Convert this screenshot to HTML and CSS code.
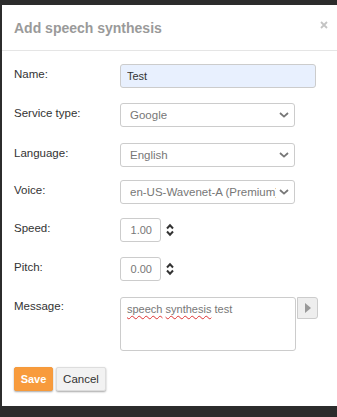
FILE: index.html
```html
<!DOCTYPE html>
<html>
<head>
<meta charset="utf-8">
<link rel="stylesheet" href="styles.css">
</head>
<body>
<div class="overlay">
  <div class="dialog">
    <div class="dialog-header">
      <h1 class="title">Add speech synthesis</h1>
      <button class="close" aria-label="Close">
        <svg width="8" height="8" viewBox="0 0 8 8"><path d="M1 1L7 7M7 1L1 7" stroke="#c4c4c4" stroke-width="1.8" fill="none"/></svg>
      </button>
    </div>
    <form class="dialog-body">
      <div class="row row-name">
        <label class="label">Name:</label>
        <input class="input input-name" type="text" value="Test">
      </div>
      <div class="row row-service">
        <label class="label">Service type:</label>
        <div class="select"><span>Google</span><svg class="chev" width="10" height="6" viewBox="0 0 10 6"><path d="M1 1L5 4.6L9 1" stroke="#777" stroke-width="1.8" fill="none"/></svg></div>
      </div>
      <div class="row row-language">
        <label class="label">Language:</label>
        <div class="select"><span>English</span><svg class="chev" width="10" height="6" viewBox="0 0 10 6"><path d="M1 1L5 4.6L9 1" stroke="#777" stroke-width="1.8" fill="none"/></svg></div>
      </div>
      <div class="row row-voice">
        <label class="label">Voice:</label>
        <div class="select"><span class="clip">en-US-Wavenet-A (Premium)</span><svg class="chev" width="10" height="6" viewBox="0 0 10 6"><path d="M1 1L5 4.6L9 1" stroke="#777" stroke-width="1.8" fill="none"/></svg></div>
      </div>
      <div class="row row-speed">
        <label class="label">Speed:</label>
        <div class="num-wrap">
          <input class="input num" type="text" value="1.00">
          <svg class="spin" width="8" height="14" viewBox="0 0 8 14"><path d="M1 5.5L4 2.3L7 5.5M1 8.5L4 11.7L7 8.5" stroke="#333" stroke-width="2" fill="none"/></svg>
        </div>
      </div>
      <div class="row row-pitch">
        <label class="label">Pitch:</label>
        <div class="num-wrap">
          <input class="input num" type="text" value="0.00">
          <svg class="spin" width="8" height="14" viewBox="0 0 8 14"><path d="M1 5.5L4 2.3L7 5.5M1 8.5L4 11.7L7 8.5" stroke="#333" stroke-width="2" fill="none"/></svg>
        </div>
      </div>
      <div class="row row-message">
        <label class="label label-top">Message:</label>
        <div class="msg-wrap">
          <div class="textarea"><span class="typo">speech</span> <span class="typo">synthesis</span> test</div>
          <button type="button" class="play" aria-label="Play">
            <svg width="6" height="10" viewBox="0 0 6 10"><path d="M0 0L6 5L0 10Z" fill="#999"/></svg>
          </button>
        </div>
      </div>
      <div class="actions">
        <button type="button" class="btn btn-save">Save</button>
        <button type="button" class="btn btn-cancel">Cancel</button>
      </div>
    </form>
  </div>
</div>
</body>
</html>
```

FILE: styles.css
```css
html, body {
  margin: 0;
  padding: 0;
  background: #2c2c2c;
  height: 417px;
  overflow: hidden;
  font-family: "Liberation Sans", Arial, sans-serif;
}

.overlay {
  padding: 5px 0 0 2px;
}

.dialog {
  background: #fff;
  width: 340px;
  box-sizing: border-box;
}

.dialog-header {
  position: relative;
  height: 45px;
  border-bottom: 1px solid #e5e5e5;
  box-sizing: content-box;
}

.title {
  margin: 0;
  padding: 15px 0 0 12px;
  font-size: 14px;
  line-height: 16px;
  font-weight: bold;
  color: #9a9a9a;
}

.close {
  position: absolute;
  top: 13px;
  left: 315px;
  width: 14px;
  height: 14px;
  padding: 0;
  border: 0;
  background: transparent;
  display: flex;
  align-items: center;
  justify-content: center;
}

.dialog-body {
  margin: 0;
  padding: 13px 12px 15px 12px;
}

.row {
  display: grid;
  grid-template-columns: 106px auto;
  align-items: start;
  margin-bottom: 15px;
}

.row-service { margin-bottom: 16px; }
.row-language { margin-bottom: 13px; }
.row-voice { margin-bottom: 14px; }
.row-pitch { margin-bottom: 16px; }

.label {
  font-size: 11.5px;
  line-height: 21px;
  color: #333;
}

.label-top {
  line-height: 18px;
}

.input {
  box-sizing: border-box;
  height: 24px;
  border: 1px solid #ccc;
  border-radius: 3px;
  font-family: "Liberation Sans", Arial, sans-serif;
  font-size: 11px;
  color: #333;
  margin: 0;
  outline: none;
}

.input-name {
  width: 196px;
  background: #e8f0fe;
  padding: 0 6px;
}

.select {
  box-sizing: border-box;
  width: 175px;
  height: 24px;
  border: 1px solid #ccc;
  border-radius: 3px;
  display: flex;
  align-items: center;
  justify-content: space-between;
  padding: 0 5px 0 9px;
  font-size: 11.5px;
  color: #777;
  background: #fff;
}

.select span {
  white-space: nowrap;
  overflow: hidden;
}

.clip {
  flex: none;
  width: 146px;
}

.chev {
  flex: none;
}

.num-wrap {
  display: flex;
  align-items: center;
  gap: 5px;
}

.num {
  width: 41px;
  text-align: right;
  padding: 0 8px 0 0;
  color: #777;
  background: #fff;
}

.spin {
  flex: none;
}

.msg-wrap {
  display: flex;
  align-items: flex-start;
}

.textarea {
  box-sizing: border-box;
  width: 176px;
  height: 54px;
  border: 1px solid #ccc;
  border-radius: 3px;
  padding: 4px 6px;
  font-size: 11px;
  line-height: 14px;
  color: #777;
}

.typo {
  text-decoration: underline wavy #d33;
  text-decoration-thickness: 1px;
  text-underline-offset: 2px;
}

.play {
  box-sizing: border-box;
  width: 21px;
  height: 22px;
  margin: 0 0 0 1px;
  padding: 0;
  border: 1px solid #ccc;
  border-radius: 0 3px 3px 0;
  background: #eee;
  display: flex;
  align-items: center;
  justify-content: center;
}

.actions {
  display: flex;
  gap: 3px;
  margin-top: 16px;
}

.btn {
  box-sizing: border-box;
  height: 24px;
  padding: 0;
  border-radius: 2px;
  font-family: "Liberation Sans", Arial, sans-serif;
  box-shadow: 0 1px 2px rgba(0, 0, 0, 0.35);
}

.btn-save {
  width: 39px;
  border: 1px solid #f59a3c;
  background: #f89b3c;
  color: #fff;
  font-weight: bold;
  font-size: 11px;
}

.btn-cancel {
  width: 50px;
  border: 1px solid #ddd;
  background: #f2f2f2;
  color: #333;
  font-size: 11.5px;
}
```
